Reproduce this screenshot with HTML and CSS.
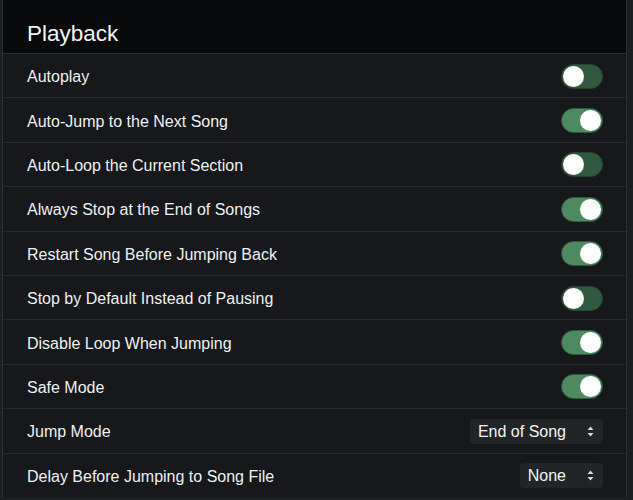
FILE: index.html
```html
<!DOCTYPE html>
<html>
<head>
<meta charset="utf-8">
<link rel="stylesheet" href="styles.css">
</head>
<body>
<div class="panel">
  <div class="header"><h1 class="title">Playback</h1></div>
  <div class="row"><span class="label">Autoplay</span><span class="toggle"></span></div>
  <div class="row"><span class="label">Auto-Jump to the Next Song</span><span class="toggle on"></span></div>
  <div class="row"><span class="label">Auto-Loop the Current Section</span><span class="toggle"></span></div>
  <div class="row"><span class="label">Always Stop at the End of Songs</span><span class="toggle on"></span></div>
  <div class="row"><span class="label">Restart Song Before Jumping Back</span><span class="toggle on"></span></div>
  <div class="row"><span class="label">Stop by Default Instead of Pausing</span><span class="toggle"></span></div>
  <div class="row"><span class="label">Disable Loop When Jumping</span><span class="toggle on"></span></div>
  <div class="row"><span class="label">Safe Mode</span><span class="toggle on"></span></div>
  <div class="row"><span class="label">Jump Mode</span><span class="select">End of Song<svg class="arrows" width="7" height="11" viewBox="0 0 7 11"><path d="M3.5 0.5 L6.5 4 H0.5 Z M3.5 10.5 L6.5 7 H0.5 Z" fill="#d8dadc"/></svg></span></div>
  <div class="row"><span class="label">Delay Before Jumping to Song File</span><span class="select">None<svg class="arrows" width="7" height="11" viewBox="0 0 7 11"><path d="M3.5 0.5 L6.5 4 H0.5 Z M3.5 10.5 L6.5 7 H0.5 Z" fill="#d8dadc"/></svg></span></div>
</div>
</body>
</html>
```
FILE: styles.css
```css
html, body {
  margin: 0;
  padding: 0;
  background: #1c1f22;
  font-family: "Liberation Sans", Arial, sans-serif;
  color: #f2f3f4;
}
.panel {
  margin: 0 6px 0 2px;
  border-left: 1px solid #2b3034;
  border-right: 1px solid #2b3034;
  background: #16181b;
  height: 497px;
}
.header {
  box-sizing: border-box;
  height: 54px;
  background: #08090a;
  border-bottom: 1px solid #272b2e;
  padding: 20px 0 0 24px;
}
.title {
  margin: 0;
  font-size: 22.5px;
  font-weight: 400;
  line-height: 28px;
  color: #f4f5f6;
}
.row {
  box-sizing: border-box;
  height: 44.4px;
  display: flex;
  align-items: center;
  justify-content: space-between;
  padding: 0 23px 0 24px;
  border-bottom: 1px solid #272b2e;
}
.label {
  font-size: 16px;
  color: #eef0f1;
  padding-top: 3px;
}
.toggle {
  box-sizing: border-box;
  width: 42px;
  height: 25px;
  border-radius: 13px;
  background: #2f5940;
  border: 1px solid #25452f;
  position: relative;
  margin-top: 1px;
}
.toggle::after {
  content: "";
  position: absolute;
  top: 1px;
  left: 1px;
  width: 21px;
  height: 21px;
  border-radius: 50%;
  background: #ffffff;
}
.toggle.on {
  background: #4d8a60;
  border-color: #2e5a3b;
}
.toggle.on::after {
  left: auto;
  right: 1px;
}
.select {
  display: flex;
  align-items: center;
  gap: 21px;
  height: 24px;
  padding: 1px 9px 0 8px;
  background: #212528;
  border-radius: 4px;
  font-size: 16px;
  color: #f2f3f4;
  margin-top: 1px;
}
.arrows {
  display: block;
  margin-top: -1px;
}
```
